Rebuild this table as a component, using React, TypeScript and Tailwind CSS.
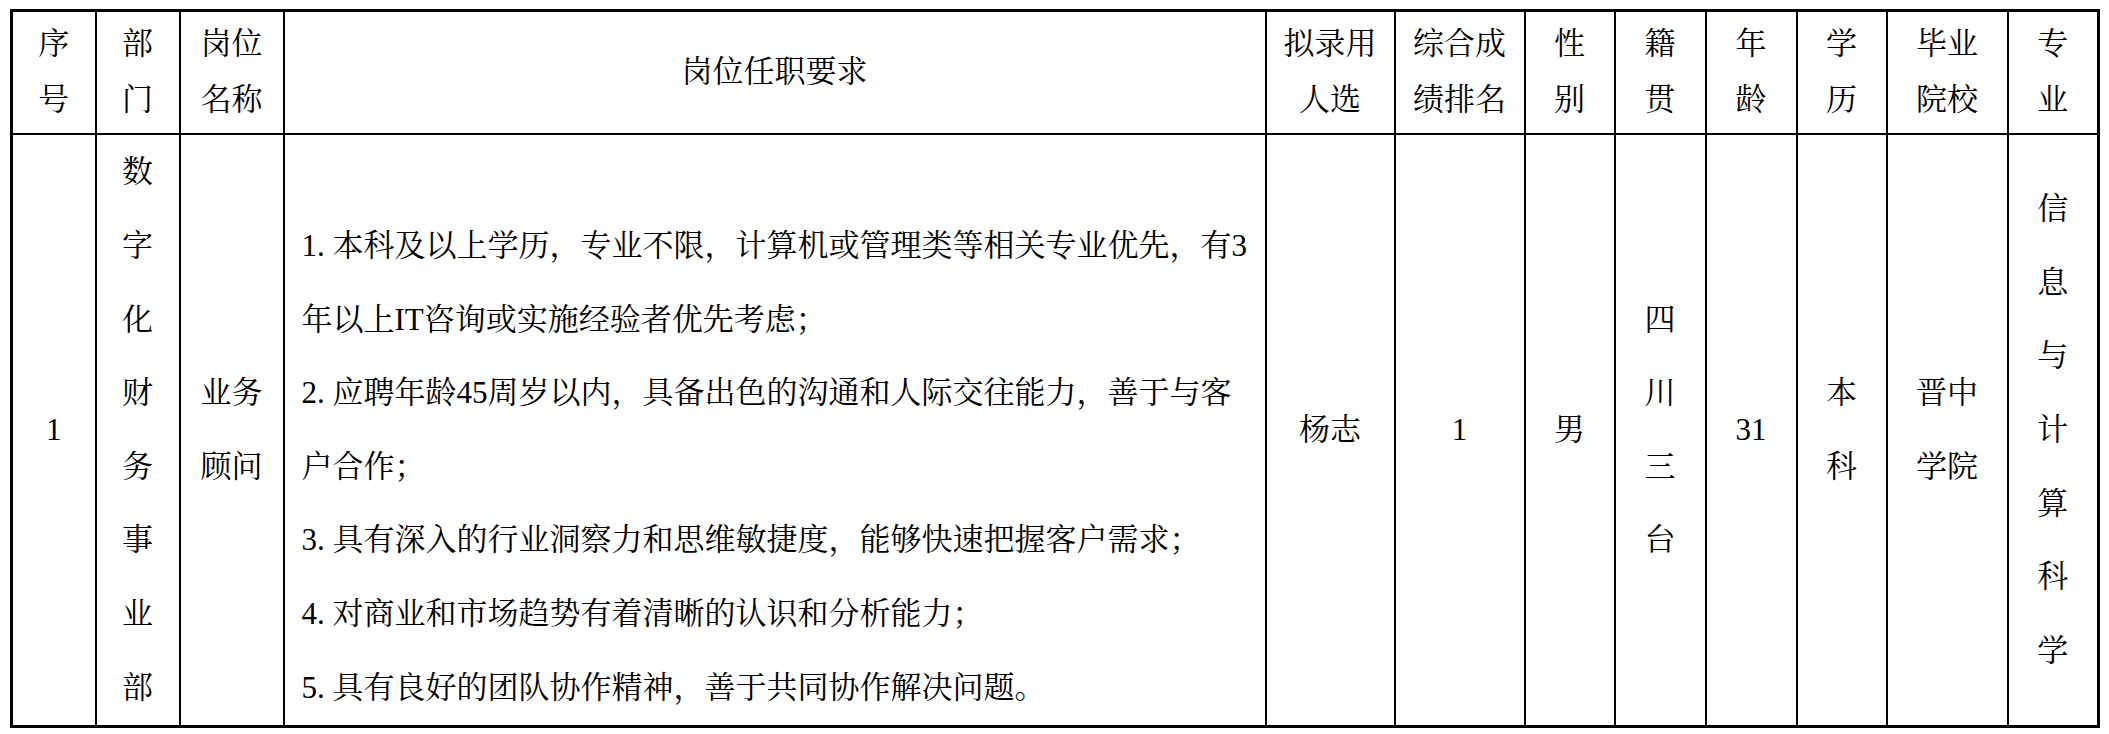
const cols = [84, 84, 104, 982, 129, 130, 90, 91, 91, 90, 121, 91]

const heads: string[][] = [
  ['序', '号'],
  ['部', '门'],
  ['岗位', '名称'],
  ['岗位任职要求'],
  ['拟录用', '人选'],
  ['综合成', '绩排名'],
  ['性', '别'],
  ['籍', '贯'],
  ['年', '龄'],
  ['学', '历'],
  ['毕业', '院校'],
  ['专', '业'],
]

// [number prefix, rest of the line]
const duties: [string, string][] = [
  ['', ''],
  ['1.', '本科及以上学历，专业不限，计算机或管理类等相关专业优先，有3'],
  ['', '年以上IT咨询或实施经验者优先考虑；'],
  ['2.', '应聘年龄45周岁以内，具备出色的沟通和人际交往能力，善于与客'],
  ['', '户合作；'],
  ['3.', '具有深入的行业洞察力和思维敏捷度，能够快速把握客户需求；'],
  ['4.', '对商业和市场趋势有着清晰的认识和分析能力；'],
  ['5.', '具有良好的团队协作精神，善于共同协作解决问题。'],
]

function Lines({ items }: { items: string[] }) {
  return (
    <>
      {items.map((t, i) => (
        <div key={i} className="h-[73.6px] whitespace-nowrap">{t}</div>
      ))}
    </>
  )
}

export default function App() {
  const cell = 'border-2 border-black p-0 text-center align-middle'
  return (
    <div
      className="min-h-screen bg-white pl-[10px] pt-[9px] text-[31px] text-black"
      style={{ fontFamily: '"Liberation Serif", "Noto Serif CJK SC", "Noto Sans CJK SC", serif' }}
    >
      <table className="table-fixed border-collapse border-[3px] border-black w-[2088px]">
        <colgroup>
          {cols.map((w, i) => (
            <col key={i} style={{ width: w }} />
          ))}
        </colgroup>
        <thead>
          <tr className="h-[123px]">
            {heads.map((h, i) => (
              <th key={i} className={`${cell} font-normal leading-[56px]`}>
                {h.map((t, j) => (
                  <div key={j} className="whitespace-nowrap">{t}</div>
                ))}
              </th>
            ))}
          </tr>
        </thead>
        <tbody>
          <tr className="h-[593px] leading-[73.6px]">
            <td className={cell}>1</td>
            <td className={cell}><Lines items={[...'数字化财务事业部']} /></td>
            <td className={cell}><Lines items={['业务', '顾问']} /></td>
            <td className={`${cell} !text-left pl-[17px]`}>
              {duties.map(([n, t], i) => (
                <div key={i} className="h-[73.6px] whitespace-nowrap">
                  {n && <span className="inline-block w-[31px]">{n}</span>}
                  {t}
                </div>
              ))}
            </td>
            <td className={cell}>杨志</td>
            <td className={cell}>1</td>
            <td className={cell}>男</td>
            <td className={cell}><Lines items={[...'四川三台']} /></td>
            <td className={cell}>31</td>
            <td className={cell}><Lines items={['本', '科']} /></td>
            <td className={cell}><Lines items={['晋中', '学院']} /></td>
            <td className={cell}><Lines items={[...'信息与计算科学']} /></td>
          </tr>
        </tbody>
      </table>
    </div>
  )
}
